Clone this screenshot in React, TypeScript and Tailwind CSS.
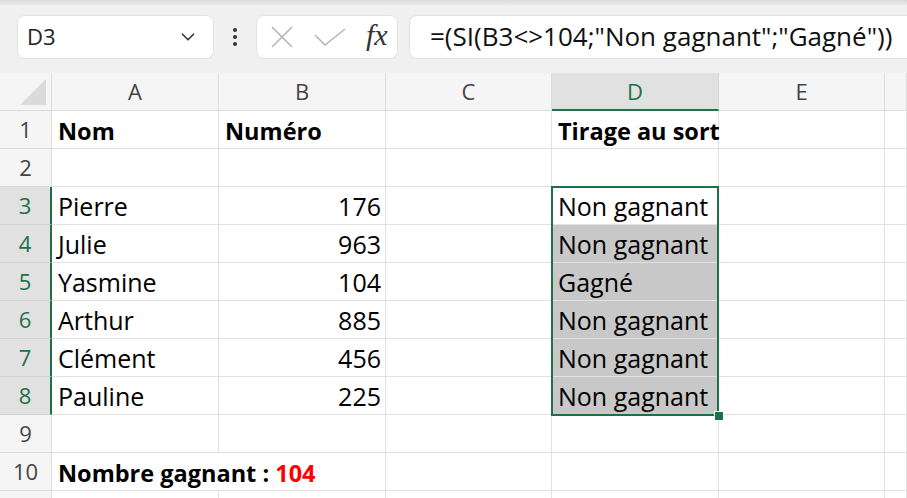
import { ChevronDown } from 'lucide-react';

const cols = ['A', 'B', 'C', 'D', 'E', ''];

const rows: { a?: string; b?: string; d?: string; bold?: boolean }[] = [
  { a: 'Nom', b: 'Numéro', d: 'Tirage au sort', bold: true },
  {},
  { a: 'Pierre', b: '176', d: 'Non gagnant' },
  { a: 'Julie', b: '963', d: 'Non gagnant' },
  { a: 'Yasmine', b: '104', d: 'Gagné' },
  { a: 'Arthur', b: '885', d: 'Non gagnant' },
  { a: 'Clément', b: '456', d: 'Non gagnant' },
  { a: 'Pauline', b: '225', d: 'Non gagnant' },
  {},
  {},
  {},
];

const grid = 'grid grid-cols-[52px_167px_167px_166px_167px_166px_1fr]';
const cell = 'h-[38px] border-r border-b border-[#e1e1e1] flex items-end pb-[5px] pl-[6px] pr-[4px] leading-none text-black whitespace-nowrap';
const normal = 'text-[25px]';
const bold = 'font-bold text-[23.5px]';

export default function App() {
  return (
    <div className="w-[907px] h-[498px] overflow-hidden bg-white font-['Open_Sans',sans-serif]">
      {/* formula bar */}
      <div className="h-[73px] bg-[#f0f0f0] relative flex items-center pl-[17px] gap-0">
        <div className="absolute inset-x-0 top-0 h-[6px] bg-gradient-to-b from-[#d8d8d8] to-[#f0f0f0]" />
        <div className="w-[197px] h-[44px] bg-white rounded-lg border border-[#e3e3e3] flex items-center justify-between pl-[9px] pr-[14px]">
          <span className="text-[22px] text-[#222]">D3</span>
          <ChevronDown size={22} strokeWidth={1.8} className="text-[#333]" />
        </div>
        <div className="w-[42px] flex flex-col items-center gap-[3px]">
          <span className="w-[4px] h-[4px] bg-[#333] rounded-full" />
          <span className="w-[4px] h-[4px] bg-[#333] rounded-full" />
          <span className="w-[4px] h-[4px] bg-[#333] rounded-full" />
        </div>
        <div className="w-[142px] h-[44px] bg-white rounded-lg border border-[#e3e3e3] flex items-center pl-[13px] gap-[20px]">
          <svg width="24" height="24" viewBox="0 0 24 24" fill="none" stroke="#b5b5b5" strokeWidth="1.6">
            <path d="M2 2L22 22M22 2L2 22" />
          </svg>
          <svg width="32" height="20" viewBox="0 0 32 20" fill="none" stroke="#b5b5b5" strokeWidth="1.6">
            <path d="M1 8L11 18L31 2" />
          </svg>
          <span className="font-['Liberation_Serif',serif] italic text-[30px] text-[#333] -mt-[4px]">fx</span>
        </div>
        <div className="ml-[11px] flex-1 h-[44px] bg-white rounded-l-lg border border-r-0 border-[#e3e3e3] flex items-center pl-[20px]">
          <span className="text-[26px] text-[#111] whitespace-nowrap">=(SI(B3&lt;&gt;104;"Non gagnant";"Gagné"))</span>
        </div>
      </div>

      {/* sheet */}
      <div className="relative">
        <div className={`${grid} bg-[#f5f5f5]`}>
          <div className="h-[38px] border-r border-b border-[#dcdcdc] flex items-end justify-end pr-[5px] pb-[5px]">
            <div className="w-0 h-0 border-l-[26px] border-l-transparent border-b-[26px] border-b-[#dadada]" />
          </div>
          {cols.map((c, i) => (
            <div
              key={i}
              className={
                c === 'D'
                  ? 'h-[38px] bg-[#e1e1e1] border-r border-[#d6d6d6] border-b-2 border-b-[#1e7145] flex items-center justify-center text-[22px] text-[#1e7145]'
                  : 'h-[38px] border-r border-b border-[#dcdcdc] flex items-center justify-center text-[22px] text-[#444]'
              }
            >
              {c}
            </div>
          ))}
        </div>

        {rows.map((r, i) => {
          const n = i + 1;
          const sel = n >= 3 && n <= 8;
          const f = r.bold ? bold : normal;
          return (
            <div key={n} className={grid}>
              <div
                className={
                  sel
                    ? 'h-[38px] bg-[#e1e1e1] border-b border-[#d2d2d2] border-r-2 border-r-[#1e7145] flex items-center justify-center text-[22px] text-[#1e7145]'
                    : 'h-[38px] bg-[#f5f5f5] border-r border-b border-[#dcdcdc] flex items-center justify-center text-[22px] text-[#444]'
                }
              >
                {n < 11 ? n : ''}
              </div>
              {n === 10 ? (
                <div className={`${cell} col-span-2 ${bold}`}>
                  Nombre gagnant :&nbsp;<span className="text-[#ff0000]">104</span>
                </div>
              ) : (
                <>
                  <div className={`${cell} ${f}`}>{r.a}</div>
                  <div className={`${cell} ${f} ${r.bold ? '' : 'justify-end'}`}>{r.b}</div>
                </>
              )}
              <div className={cell} />
              <div className={`${cell} ${f} ${n >= 4 && n <= 8 ? 'bg-[#c8c8c8] border-[#b9b9b9]' : ''}`}>{r.d}</div>
              <div className={cell} />
              <div className={cell} />
            </div>
          );
        })}

        {/* selection D3:D8 */}
        <div className="absolute left-[551px] top-[113px] w-[168px] h-[230px] border-2 border-[#1e7145] pointer-events-none" />
        <div className="absolute left-[715px] top-[339px] w-[8px] h-[8px] bg-[#1e7145] outline outline-1 outline-white pointer-events-none" />
      </div>
    </div>
  );
}
